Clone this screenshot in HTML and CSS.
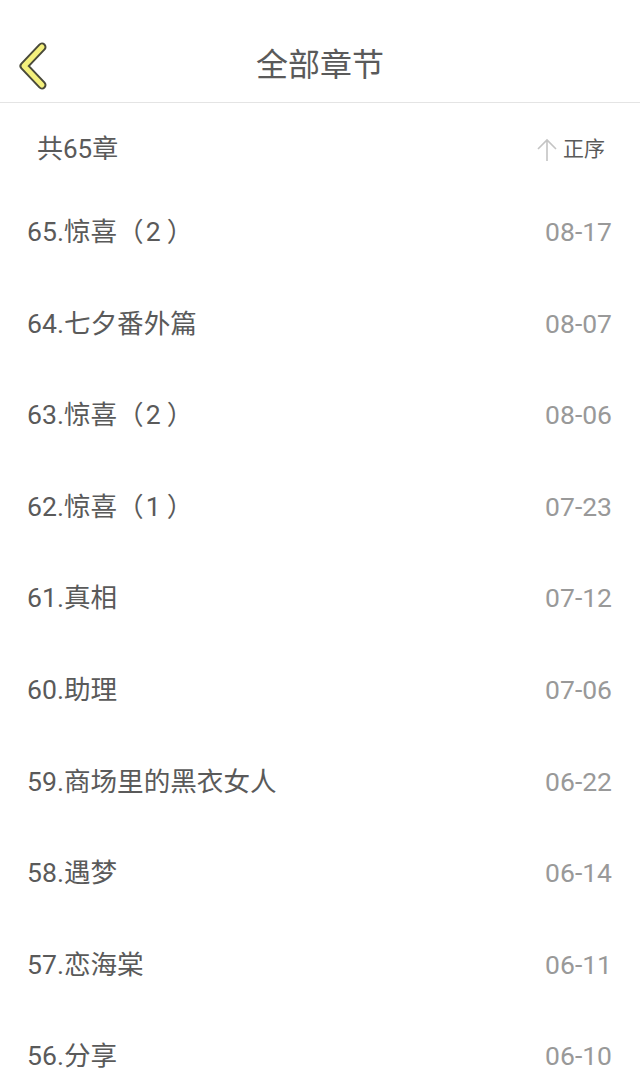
FILE: index.html
```html
<!DOCTYPE html>
<html lang="zh">
<head>
<meta charset="utf-8">
<link rel="stylesheet" href="styles.css">
</head>
<body>
<header class="topbar">
  <svg class="back" width="40" height="50" viewBox="0 0 40 50">
    <polyline points="26,6 8,25 26,44" fill="none" stroke="#4a4a3a" stroke-width="9" stroke-linecap="round" stroke-linejoin="round"/>
    <polyline points="26,6 8,25 26,44" fill="none" stroke="#f4f07c" stroke-width="5" stroke-linecap="round" stroke-linejoin="round"/>
  </svg>
  <h1 class="title">全部章节</h1>
</header>
<div class="summary">
  <span class="count">共65章</span>
  <span class="order">
    <svg class="arrow" width="20" height="24" viewBox="0 0 20 24">
      <path d="M10 2 V23 M1 11 L10 2 L19 11" fill="none" stroke="#c4c4c4" stroke-width="1.6"/>
    </svg>正序</span>
</div>
<ul class="chapters">
  <li class="row"><span class="name">65.惊喜（<span class="pn">2</span>）</span><span class="date">08-17</span></li>
  <li class="row"><span class="name">64.七夕番外篇</span><span class="date">08-07</span></li>
  <li class="row"><span class="name">63.惊喜（<span class="pn">2</span>）</span><span class="date">08-06</span></li>
  <li class="row"><span class="name">62.惊喜（<span class="pn">1</span>）</span><span class="date">07-23</span></li>
  <li class="row"><span class="name">61.真相</span><span class="date">07-12</span></li>
  <li class="row"><span class="name">60.助理</span><span class="date">07-06</span></li>
  <li class="row"><span class="name">59.商场里的黑衣女人</span><span class="date">06-22</span></li>
  <li class="row"><span class="name">58.遇梦</span><span class="date">06-14</span></li>
  <li class="row"><span class="name">57.恋海棠</span><span class="date">06-11</span></li>
  <li class="row"><span class="name">56.分享</span><span class="date">06-10</span></li>
</ul>
</body>
</html>
```
FILE: styles.css
```css
* { box-sizing: border-box; }
html, body { margin: 0; padding: 0; background: #fff; }
body {
  font-family: Roboto, "Noto Sans CJK SC", sans-serif;
  color: #5a5a5a;
  width: 640px;
  height: 1076px;
  overflow: hidden;
}
.topbar {
  position: relative;
  height: 103px;
  border-bottom: 1px solid #e4e4e4;
  display: flex;
  align-items: center;
  justify-content: center;
}
.back {
  position: absolute;
  left: 16px;
  top: 41px;
}
.title {
  margin: 0;
  font-size: 32px;
  line-height: 40px;
  font-weight: 400;
  color: #5a5a5a;
  padding-top: 28px;
}
.summary {
  height: 82px;
  display: flex;
  align-items: center;
  justify-content: space-between;
  padding: 10px 35px 0 37px;
}
.count { font-size: 26px; line-height: 30px; color: #5a5a5a; }
.order { font-size: 21px; line-height: 26px; color: #5a5a5a; display: flex; align-items: center; }
.arrow { margin-right: 6px; margin-top: 2px; }
.chapters { list-style: none; margin: 0; padding: 0; }
.row {
  height: 91.6px;
  display: flex;
  align-items: baseline;
  justify-content: space-between;
  padding: 29px 28px 0 27px;
  line-height: 36px;
}
.name { font-size: 26.6px; color: #5a5a5a; }
.pn { padding: 0 6px 0 2px; }
.date { font-size: 26.5px; color: #999; }
```
